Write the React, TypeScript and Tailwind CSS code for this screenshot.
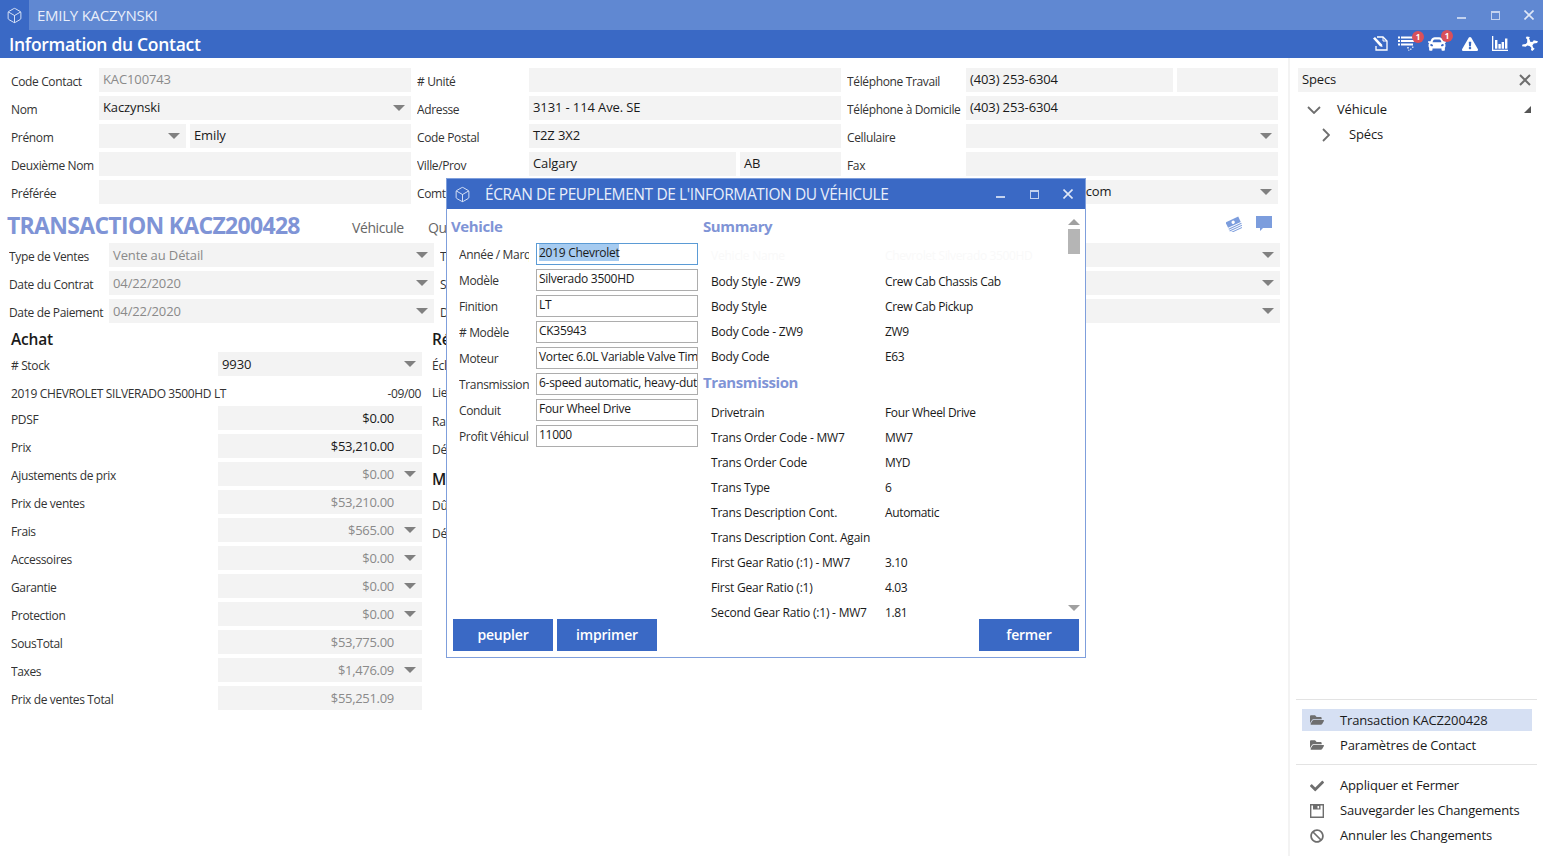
import { Box } from 'lucide-react'
import { FaBan, FaCar, FaCheck, FaExclamationTriangle, FaFolderOpen } from 'react-icons/fa'

const Caret = ({ className = '' }: { className?: string }) => (
  <svg width="12" height="6" viewBox="0 0 12 6" className={`shrink-0 ${className}`}>
    <polygon points="0,0 12,0 6,6" fill="#808080" />
  </svg>
)

const Field = ({
  w,
  value,
  caret,
  muted,
  className = '',
}: {
  w?: string
  value?: string
  caret?: boolean
  muted?: boolean
  className?: string
}) => (
  <div className={`flex h-6 items-center bg-[#f3f3f3] pl-[4px] text-[13px] tracking-[-0.12px] ${w ?? 'flex-1'} ${className}`}>
    <span className={`flex-1 whitespace-nowrap ${muted ? 'text-[#8a8a8a]' : 'text-[#1a1a1a]'}`}>{value}</span>
    {caret && <Caret className="mr-[6px]" />}
  </div>
)

const Label = ({ w, children }: { w: string; children?: string }) => (
  <div className={`${w} shrink-0 overflow-hidden whitespace-nowrap pt-[5px] tracking-[-0.36px] text-[#333]`}>{children}</div>
)

const WinButtons = () => (
  <div className="flex items-center">
    <span className="mt-[6px] h-[2px] w-[9px] bg-[#c3d2ef]" />
    <span className="ml-[25px] h-[9px] w-[9px] border border-t-2 border-[#c3d2ef]" />
    <svg width="10" height="10" viewBox="0 0 10 10" className="ml-[24px]">
      <path d="M0.5 0.5 L9.5 9.5 M9.5 0.5 L0.5 9.5" stroke="#dfe7f7" strokeWidth="1.6" />
    </svg>
  </div>
)

const Badge = ({ className }: { className: string }) => (
  <span className={`absolute -top-[5px] flex h-[12px] w-[12px] items-center justify-center rounded-full bg-[#d9505a] text-[8px] font-bold text-white ${className}`}>
    1
  </span>
)

const NoteIcon = () => (
  <svg width="16" height="15" viewBox="0 0 16 15" fill="none">
    <path d="M5 1 H11 L15 5 V14 H4 V10" stroke="#fff" strokeWidth="1.3" />
    <path d="M11 1 V5 H15" stroke="#fff" strokeWidth="1" />
    <path d="M1 2.5 L3 1 L10 8.5 L10.5 11 L8 10.2 Z" fill="#fff" />
  </svg>
)

const ListIcon = () => (
  <svg width="17" height="15" viewBox="0 0 17 15" fill="#fff">
    <rect x="0" y="0.5" width="2" height="2" />
    <rect x="3" y="0.5" width="12" height="2" />
    <rect x="0" y="4" width="2" height="2" />
    <rect x="3" y="4" width="14" height="2" />
    <rect x="0" y="7.5" width="2" height="2" />
    <rect x="3" y="7.5" width="12" height="2" />
    <rect x="9" y="11" width="2" height="1.5" opacity=".7" />
    <rect x="12" y="12.5" width="1.5" height="1.5" opacity=".7" />
    <rect x="14" y="10.5" width="1.5" height="1.5" opacity=".7" />
    <rect x="10" y="13.5" width="1.5" height="1.5" opacity=".5" />
  </svg>
)

const ChartIcon = () => (
  <svg width="16" height="15" viewBox="0 0 16 15" fill="#fff">
    <rect x="0" y="0" width="1.3" height="15" />
    <rect x="0" y="13.7" width="16" height="1.3" />
    <rect x="3" y="4" width="2.4" height="8.7" />
    <rect x="6.4" y="8" width="2.4" height="4.7" />
    <rect x="9.6" y="6" width="2.4" height="6.7" />
    <rect x="13" y="2.5" width="2.4" height="10.2" />
  </svg>
)

const DroneIcon = () => (
  <svg width="16" height="16" viewBox="0 0 17 16" fill="#fff">
    <path d="M5 0 L8.5 0.5 L7.5 2 L9 6 L11.5 5.5 L12.5 4 L17 5 L16 7 L12.5 7.5 L11 9.5 L12 12 L13.5 13 L11 15.5 L9.5 14.5 L10 12 L8 10 L5.5 9.5 L4 11 L0 10.5 L0.5 8.5 L4 8 L5.5 6.5 L5.5 3 L4 1.5 Z" />
  </svg>
)

const MoneyIcon = () => (
  <svg width="16" height="16" viewBox="0 0 16 16">
    <g transform="rotate(-25 8 8)" fill="#7c9ddd">
      <rect x="1" y="3" width="14" height="6" />
      <circle cx="8" cy="6" r="1.7" fill="#fff" />
      <rect x="1" y="10" width="14" height="1" />
      <rect x="1" y="12" width="14" height="1" />
      <rect x="1" y="14" width="14" height="1" />
    </g>
  </svg>
)

const FloppyIcon = () => (
  <svg width="14" height="14" viewBox="0 0 14 14" fill="none">
    <path d="M0.7 0.7 H13.3 V13.3 H0.7 Z" stroke="#6e6e6e" strokeWidth="1.4" />
    <path d="M3 1 H10.5 V5.5 H3 Z" fill="#6e6e6e" />
    <rect x="7.5" y="2" width="1.6" height="2.4" fill="#fff" />
  </svg>
)

const contactRows = [
  { label: 'Code Contact', field: <Field muted value="KAC100743" /> },
  { label: 'Nom', field: <Field caret value="Kaczynski" /> },
  {
    label: 'Prénom',
    field: (
      <div className="flex flex-1 gap-[4px]">
        <Field w="w-[87px]" caret />
        <Field value="Emily" />
      </div>
    ),
  },
  { label: 'Deuxième Nom', field: <Field /> },
  { label: 'Préférée', field: <Field /> },
]

const addressRows = [
  { label: '# Unité', field: <Field /> },
  { label: 'Adresse', field: <Field value="3131 - 114 Ave. SE" /> },
  { label: 'Code Postal', field: <Field value="T2Z 3X2" /> },
  {
    label: 'Ville/Prov',
    field: (
      <div className="flex flex-1 gap-[4px]">
        <Field value="Calgary" />
        <Field w="w-[101px]" value="AB" />
      </div>
    ),
  },
  { label: 'Comté', field: <Field /> },
]

const phoneRows = [
  {
    label: 'Téléphone Travail',
    field: (
      <div className="flex flex-1 gap-[4px]">
        <Field value="(403) 253-6304" />
        <Field w="w-[101px]" />
      </div>
    ),
  },
  { label: 'Téléphone à Domicile', field: <Field value="(403) 253-6304" /> },
  { label: 'Cellulaire', field: <Field caret /> },
  { label: 'Fax', field: <Field /> },
  { label: 'Courriel', field: <Field caret value="kaczynski.e.@shaw.com" /> },
]

const achatRows = [
  ['PDSF', '$0.00', 'dark', ''],
  ['Prix', '$53,210.00', 'dark', ''],
  ['Ajustements de prix', '$0.00', '', 'caret'],
  ['Prix de ventes', '$53,210.00', '', ''],
  ['Frais', '$565.00', '', 'caret'],
  ['Accessoires', '$0.00', '', 'caret'],
  ['Garantie', '$0.00', '', 'caret'],
  ['Protection', '$0.00', '', 'caret'],
  ['SousTotal', '$53,775.00', '', ''],
  ['Taxes', '$1,476.09', '', 'caret'],
  ['Prix de ventes Total', '$55,251.09', '', ''],
]

const vehicleRows = [
  ['Année / Marque', '2019 Chevrolet'],
  ['Modèle', 'Silverado 3500HD'],
  ['Finition', 'LT'],
  ['# Modèle', 'CK35943'],
  ['Moteur', 'Vortec 6.0L Variable Valve Timing'],
  ['Transmission', '6-speed automatic, heavy-duty'],
  ['Conduit', 'Four Wheel Drive'],
  ['Profit Véhicule', '11000'],
]

const summaryRows = [
  ['Body Style - ZW9', 'Crew Cab Chassis Cab'],
  ['Body Style', 'Crew Cab Pickup'],
  ['Body Code - ZW9', 'ZW9'],
  ['Body Code', 'E63'],
]

const transRows = [
  ['Drivetrain', 'Four Wheel Drive'],
  ['Trans Order Code - MW7', 'MW7'],
  ['Trans Order Code', 'MYD'],
  ['Trans Type', '6'],
  ['Trans Description Cont.', 'Automatic'],
  ['Trans Description Cont. Again', ''],
  ['First Gear Ratio (:1) - MW7', '3.10'],
  ['First Gear Ratio (:1)', '4.03'],
  ['Second Gear Ratio (:1) - MW7', '1.81'],
]

const SpecRow = ({ name, value, faint }: { name: string; value: string; faint?: boolean }) => (
  <div className={`flex h-[25px] items-center pl-[8px] ${faint ? 'text-[#f9f9f9]' : 'text-[#1a1a1a]'}`}>
    <span className="w-[174px] shrink-0 whitespace-nowrap">{name}</span>
    <span className="whitespace-nowrap tracking-[-0.35px]">{value}</span>
  </div>
)

const Modal = () => (
  <div className="absolute left-[446px] top-[178px] flex h-[480px] w-[640px] flex-col border border-[#7f9fdc] bg-white">
    <div className="flex h-[30px] shrink-0 items-center bg-[#3a69c5] pr-[12px] text-white">
      <Box size={17} strokeWidth={1.4} className="ml-[7px] text-[#d5e0f5]" />
      <span className="ml-[14px] flex-1 text-[15.5px] tracking-[-0.4px] text-[#e8eefa]">
        ÉCRAN DE PEUPLEMENT DE L'INFORMATION DU VÉHICULE
      </span>
      <WinButtons />
    </div>
    <div className="flex min-h-0 flex-1">
      <div className="w-[256px] shrink-0 pl-[4px]">
        <h3 className="h-[34px] pt-[5px] text-[15px] font-bold leading-[24px] tracking-[-0.4px] text-[#7f94d6]">Vehicle</h3>
        {vehicleRows.map(([label, value], i) => (
          <div key={label} className="mb-[4px] flex h-[22px]">
            <div className="ml-[8px] w-[70px] shrink-0 overflow-hidden whitespace-nowrap pt-[3px] tracking-[-0.35px] text-[#333]">{label}</div>
            <div className={`ml-[7px] w-[162px] overflow-hidden whitespace-nowrap border px-[2px] leading-[17px] tracking-[-0.28px] text-[#1a1a1a] ${i === 0 ? 'border-[#5b9bd5]' : 'border-[#adadad]'}`}>
              {i === 0 ? <span className="bg-[#a6cbf0]">{value}</span> : value}
            </div>
          </div>
        ))}
      </div>
      <div className="relative flex-1 overflow-hidden">
        <h3 className="h-[34px] pt-[5px] text-[15px] font-bold leading-[24px] tracking-[-0.4px] text-[#7f94d6]">Summary</h3>
        <SpecRow faint name="Vehicle Name" value="Chevrolet Silverado 3500HD" />
        <div className="h-[1px]" />
        {summaryRows.map(([n, v]) => <SpecRow key={n} name={n} value={v} />)}
        <h3 className="h-[31px] pt-[1px] text-[15px] font-bold leading-[24px] tracking-[-0.4px] text-[#7f94d6]">Transmission</h3>
        {transRows.map(([n, v]) => <SpecRow key={n} name={n} value={v} />)}
      </div>
      <div className="mr-[5px] flex w-[13px] shrink-0 flex-col items-center pt-[10px]">
        <svg width="12" height="6" viewBox="0 0 12 6"><polygon points="6,0 12,6 0,6" fill="#a0a0a0" /></svg>
        <div className="mt-[4px] h-[25px] w-[12px] bg-[#b5b5b5]" />
        <svg width="12" height="6" viewBox="0 0 12 6" className="mt-[351px]"><polygon points="0,0 12,0 6,6" fill="#a0a0a0" /></svg>
      </div>
    </div>
    <div className="flex h-[38px] shrink-0 gap-[4px] px-[6px] text-[14px] font-semibold text-white">
      <button className="h-[32px] w-[100px] bg-[#3a69c5] tracking-[-0.2px]">peupler</button>
      <button className="h-[32px] w-[100px] bg-[#3a69c5] tracking-[-0.2px]">imprimer</button>
      <button className="ml-auto h-[32px] w-[100px] bg-[#3a69c5] tracking-[-0.2px]">fermer</button>
    </div>
  </div>
)

export default function App() {
  return (
    <div className="relative flex h-[856px] w-[1543px] flex-col overflow-hidden bg-white font-['Open_Sans',sans-serif] text-[12px] leading-[18px] tracking-[-0.22px]">
      <div className="flex h-[30px] shrink-0 items-center bg-[#6088d2] pr-[9px]">
        <div className="flex h-full w-[29px] items-center justify-center bg-[#3a69c5]">
          <Box size={17} strokeWidth={1.4} className="text-[#d5e0f5]" />
        </div>
        <span className="ml-[8px] flex-1 text-[15px] tracking-[-0.25px] text-[#e8eefa]">EMILY KACZYNSKI</span>
        <WinButtons />
      </div>
      <div className="flex h-[28px] shrink-0 items-center bg-[#3a69c5] pl-[9px] pr-[5px] text-white">
        <span className="flex-1 text-[17.5px] font-semibold tracking-[-0.3px]">Information du Contact</span>
        <div className="-mt-[1px] flex items-center">
          <NoteIcon />
          <span className="relative ml-[10px]"><ListIcon /><Badge className="-right-[9px]" /></span>
          <span className="relative ml-[13px]"><FaCar size={18} /><Badge className="-right-[7px]" /></span>
          <FaExclamationTriangle size={16} className="ml-[16px]" />
          <span className="ml-[14px]"><ChartIcon /></span>
          <span className="ml-[14px]"><DroneIcon /></span>
        </div>
      </div>
      <div className="flex min-h-0 flex-1">
        <main className="w-[1288px] shrink-0 pt-[10px]">
          <div className="flex h-[136px] pl-[11px] [&_span]:-mt-[2px]">
            <div className="w-[400px] shrink-0">
              {contactRows.map((r) => (
                <div key={r.label} className="mb-[4px] flex h-6">
                  <Label w="w-[88px]">{r.label}</Label>
                  {r.field}
                </div>
              ))}
            </div>
            <div className="ml-[6px] w-[424px] shrink-0">
              {addressRows.map((r) => (
                <div key={r.label} className="mb-[4px] flex h-6">
                  <Label w="w-[112px]">{r.label}</Label>
                  {r.field}
                </div>
              ))}
            </div>
            <div className="ml-[6px] w-[431px] shrink-0">
              {phoneRows.map((r) => (
                <div key={r.label} className="mb-[4px] flex h-6">
                  <Label w="w-[119px]">{r.label}</Label>
                  {r.field}
                </div>
              ))}
            </div>
          </div>

          <div className="flex h-[39px] items-center pl-[7px] pr-[16px]">
            <h1 className="mt-[3px] w-[345px] text-[23px] font-bold tracking-[-0.7px] text-[#7f94d6]">TRANSACTION KACZ200428</h1>
            <span className="mt-[9px] w-[76px] text-[14px] tracking-[-0.4px] text-[#666]">Véhicule</span>
            <span className="mt-[9px] flex-1 text-[14px] tracking-[-0.4px] text-[#666]">Québec</span>
            <MoneyIcon />
            <svg width="16" height="16" viewBox="0 0 16 16" className="ml-[14px]"><path d="M0 0 H16 V12 H7 L4 15 V12 H0 Z" fill="#7c9ddd" /></svg>
          </div>

          <div className="pl-[9px] pr-[8px]">
            {[
              ['Type de Ventes', 'Vente au Détail', 'Type'],
              ['Date du Contrat', '04/22/2020', 'Statut'],
              ['Date de Paiement', '04/22/2020', 'Date'],
            ].map(([label, value, other]) => (
              <div key={label} className="mb-[4px] flex h-6">
                <Label w="w-[100px]">{label}</Label>
                <Field w="w-[325px]" muted caret value={value} />
                <Label w="ml-[6px] w-[120px]">{other}</Label>
                <Field caret />
              </div>
            ))}
          </div>

          <div className="flex pl-[11px]">
            <section className="w-[411px] shrink-0">
              <h2 className="h-[25px] text-[15.5px] font-semibold leading-[24px] tracking-[-0.2px] text-[#1a1a1a]">Achat</h2>
              <div className="flex h-6">
                <Label w="w-[207px]"># Stock</Label>
                <Field caret value="9930" />
              </div>
              <div className="flex h-[30px] items-center justify-between pt-[6px] tracking-[-0.36px] text-[#333]">
                <span>2019 CHEVROLET SILVERADO 3500HD LT</span>
                <span className="pr-[1px]">-09/00</span>
              </div>
              {achatRows.map(([label, value, dark, caret]) => (
                <div key={label} className="mb-[4px] flex h-6">
                  <Label w="w-[207px]">{label}</Label>
                  <div className="flex h-6 flex-1 items-center bg-[#f3f3f3] text-[13px] tracking-[-0.3px]">
                    <span className={`w-[176px] text-right ${dark ? 'text-[#1a1a1a]' : 'text-[#8a8a8a]'}`}>{value}</span>
                    {caret && <Caret className="ml-[10px]" />}
                  </div>
                </div>
              ))}
            </section>
            <section className="ml-[10px] flex-1 text-[#333]">
              <h2 className="h-[25px] text-[15.5px] font-semibold leading-[24px] text-[#1a1a1a]">Réduction</h2>
              <div className="h-[28px] pt-[5px]">Éclairage</div>
              <div className="h-[28px] pt-[4px]">Lien</div>
              <div className="h-[28px] pt-[5px]">Rabais</div>
              <div className="h-[28px] pt-[5px]">Dépôt</div>
              <h2 className="h-[28px] pt-[3px] text-[15.5px] font-semibold leading-[24px] text-[#1a1a1a]">Montant</h2>
              <div className="h-[28px] pt-[5px]">Dû</div>
              <div className="h-[28px] pt-[5px]">Dépôt</div>
            </section>
          </div>
        </main>

        <aside className="flex flex-1 flex-col justify-between border-l-2 border-[#f3f3f3] pb-[8px] pt-[10px] text-[13px] tracking-[-0.15px] text-[#1a1a1a]">
          <div className="[&_span]:-mt-[2px]">
            <div className="ml-[8px] mr-[7px] flex h-6 items-center justify-between bg-[#f3f3f3] pl-[4px] pr-[5px]">
              <span>Specs</span>
              <svg width="12" height="12" viewBox="0 0 12 12"><path d="M1 1 L11 11 M11 1 L1 11" stroke="#6e6e6e" strokeWidth="2" /></svg>
            </div>
            <div className="mt-[5px] flex h-[25px] items-center pl-[17px] pr-[12px]">
              <svg width="14" height="8" viewBox="0 0 14 8"><path d="M1 1 L7 7 L13 1" fill="none" stroke="#6e6e6e" strokeWidth="1.8" /></svg>
              <span className="ml-[16px] flex-1">Véhicule</span>
              <svg width="7" height="7" viewBox="0 0 7 7"><polygon points="7,0 7,7 0,7" fill="#555" /></svg>
            </div>
            <div className="flex h-[25px] items-center pl-[32px]">
              <svg width="8" height="14" viewBox="0 0 8 14"><path d="M1 1 L7 7 L1 13" fill="none" stroke="#6e6e6e" strokeWidth="1.8" /></svg>
              <span className="ml-[19px]">Spécs</span>
            </div>
          </div>
          <div>
            <div className="mx-[6px] border-t border-[#e3e3e3] pb-[8px] pt-[9px]">
              <div className="ml-[6px] mr-[5px] flex h-[22px] items-center bg-[#d6e0f3] pl-[8px]">
                <FaFolderOpen size={14} className="text-[#6e6e6e]" />
                <span className="ml-[16px]">Transaction KACZ200428</span>
              </div>
              <div className="mt-[3px] flex h-[22px] items-center pl-[14px]">
                <FaFolderOpen size={14} className="text-[#6e6e6e]" />
                <span className="ml-[16px]">Paramètres de Contact</span>
              </div>
            </div>
            <div className="mx-[6px] border-t border-[#e3e3e3] pl-[14px] pt-[8px] [&_span]:-mt-[2px]">
              <div className="flex h-[25px] items-center">
                <FaCheck size={14} className="text-[#6e6e6e]" />
                <span className="ml-[16px]">Appliquer et Fermer</span>
              </div>
              <div className="flex h-[25px] items-center">
                <FloppyIcon />
                <span className="ml-[16px]">Sauvegarder les Changements</span>
              </div>
              <div className="flex h-[25px] items-center">
                <FaBan size={14} className="text-[#6e6e6e]" />
                <span className="ml-[16px]">Annuler les Changements</span>
              </div>
            </div>
          </div>
        </aside>
      </div>
      <Modal />
    </div>
  )
}
